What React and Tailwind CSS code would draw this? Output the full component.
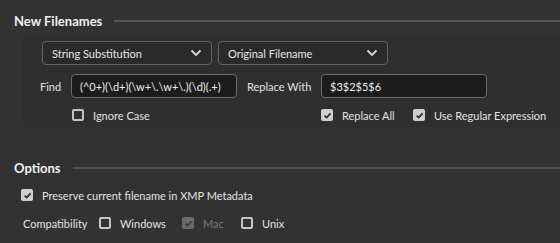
import React from 'react'

const Check = ({ checked, disabled }) => {
    if (checked) {
        return (
            <span className={`flex h-[12px] w-[12px] shrink-0 items-center justify-center rounded-[2px] ${disabled ? 'bg-[#6a6a6a]' : 'bg-[#cfcfcf]'}`}>
                <svg width="9" height="9" viewBox="0 0 10 10" fill="none">
                    <path d="M1.8 5.2 L4 7.4 L8.4 2.6" stroke={disabled ? '#3a3a3a' : '#2c2c2c'} strokeWidth="1.8" />
                </svg>
            </span>
        )
    }
    return <span className="h-[12px] w-[12px] shrink-0 rounded-[2px] border-2 border-[#c4c4c4]" />
}

const CheckItem = ({ label, checked, disabled, className = '' }) => (
    <div className={`flex h-[12px] items-center gap-[9px] ${className}`}>
        <Check checked={checked} disabled={disabled} />
        <span className={disabled ? 'text-[#7a7a7a]' : 'text-[#e2e2e2]'}>{label}</span>
    </div>
)

const Dropdown = ({ value }) => (
    <div className="flex h-[24px] w-[170px] items-center justify-between rounded-[4px] border border-[#646464] bg-[#2a2a2a] pl-[9px] pr-[9px] text-[#e6e6e6]">
        <span>{value}</span>
        <svg width="12" height="8" viewBox="0 0 12 8" fill="none">
            <path d="M1.5 1.5 L6 6 L10.5 1.5" stroke="#d8d8d8" strokeWidth="1.8" />
        </svg>
    </div>
)

const Field = ({ value, className = '' }) => (
    <div className={`flex h-[24px] items-center rounded-[4px] border border-[#6a6a6a] bg-[#1c1c1c] pl-[8px] text-[#ececec] ${className}`}>
        {value}
    </div>
)

const SectionTitle = ({ title, className = '' }) => (
    <div className={`flex h-[14px] items-center pl-[14px] ${className}`}>
        <h2 className="text-[13px] font-bold text-[#f0f0f0]">{title}</h2>
        <div className="ml-[12px] h-[2px] flex-1 bg-[#545454]" />
    </div>
)

const App = () => {
    return (
        <div className="h-[243px] w-[560px] overflow-hidden bg-[#323232] text-[11px] leading-none" style={{ fontFamily: 'Lato, "Open Sans", sans-serif' }}>
            <SectionTitle title="New Filenames" className="mt-[14px]" />

            <div className="ml-[22px] mt-[7px] h-[92px] rounded-l-[6px] bg-[#2f2f2f] pl-[20px] pt-[6px]">
                <div className="flex gap-[6px]">
                    <Dropdown value="String Substitution" />
                    <Dropdown value="Original Filename" />
                </div>

                <div className="mt-[9px] flex items-center">
                    <span className="-ml-[2px] w-[31px] text-[#e2e2e2]">Find</span>
                    <Field value="(^0+)(\d+)(\w+\.\w+\.)(\d)(.+)" className="w-[166px]" />
                    <span className="ml-[10px] w-[74px] text-[#e2e2e2]">Replace With</span>
                    <Field value="$3$2$5$6" className="w-[166px]" />
                </div>

                <div className="mt-[11px] flex items-center">
                    <CheckItem label="Ignore Case" className="ml-[30px] w-[249px]" />
                    <CheckItem label="Replace All" checked className="w-[92px]" />
                    <CheckItem label="Use Regular Expression" checked />
                </div>
            </div>

            <SectionTitle title="Options" className="mt-[34px]" />

            <CheckItem label="Preserve current filename in XMP Metadata" checked className="ml-[21px] mt-[14px]" />

            <div className="ml-[23px] mt-[16px] flex h-[12px] items-center">
                <span className="w-[76px] text-[#e2e2e2]">Compatibility</span>
                <CheckItem label="Windows" className="w-[83px]" />
                <CheckItem label="Mac" checked disabled className="w-[59px]" />
                <CheckItem label="Unix" />
            </div>
        </div>
    )
}

export default App
